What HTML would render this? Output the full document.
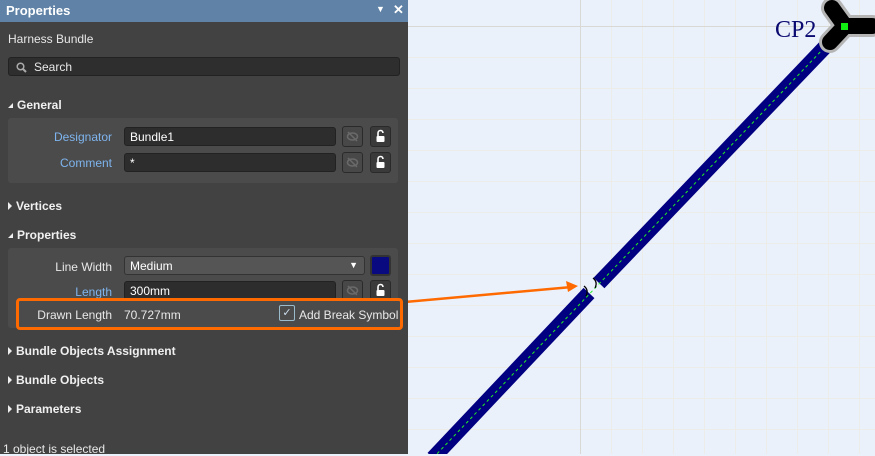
<!DOCTYPE html>
<html><head><style>
*{margin:0;padding:0;box-sizing:border-box}
body{width:875px;height:454px;overflow:hidden;background:#ebf1fb;font-family:"Liberation Sans",sans-serif;position:relative}
#p{position:absolute;left:0;top:0;width:408px;height:454px;background:#424242;color:#e8e8e8;font-size:12px}
.tb{height:22px;background:#5f82a6;color:#fff;font-weight:bold;font-size:13px;padding:3px 6px}
.abs{position:absolute}
.sec{position:absolute;left:8px;font-weight:bold;font-size:12px;color:#f0f0f0}
.tri{display:inline-block;width:0;height:0;border-top:4px solid transparent;border-bottom:4px solid transparent;border-left:4px solid #eee;margin-right:4px;vertical-align:0}
.trd{display:inline-block;width:0;height:0;border-left:5px solid transparent;border-bottom:5px solid #eee;margin-right:4px;vertical-align:1px}
.box{position:absolute;left:8px;width:390px;background:#4b4b4b;border-radius:3px}
.lbl{position:absolute;width:104px;text-align:right;font-size:12px}
.in{position:absolute;left:124px;width:212px;height:19px;background:#2d2d2d;border:1px solid #222;border-radius:3px;padding:2px 5px;font-size:12px;color:#fff}
.ib{position:absolute;width:21px;height:21px;border:1px solid #2a2a2a;border-radius:3px;background:#484848}
.lk{background:#3a3a3a}
</style></head><body>
<svg class="abs" style="left:0;top:0" width="875" height="454">
<g stroke="#ecece8" stroke-width="1">
<line x1="611.5" y1="0" x2="611.5" y2="454"/><line x1="642.5" y1="0" x2="642.5" y2="454"/><line x1="673.5" y1="0" x2="673.5" y2="454"/><line x1="704.5" y1="0" x2="704.5" y2="454"/><line x1="735.5" y1="0" x2="735.5" y2="454"/><line x1="766.5" y1="0" x2="766.5" y2="454"/><line x1="797.5" y1="0" x2="797.5" y2="454"/><line x1="828.5" y1="0" x2="828.5" y2="454"/><line x1="859.5" y1="0" x2="859.5" y2="454"/>
<line x1="408" y1="57.5" x2="875" y2="57.5"/><line x1="408" y1="88.5" x2="875" y2="88.5"/><line x1="408" y1="119.5" x2="875" y2="119.5"/><line x1="408" y1="150.5" x2="875" y2="150.5"/><line x1="408" y1="181.5" x2="875" y2="181.5"/><line x1="408" y1="212.5" x2="875" y2="212.5"/><line x1="408" y1="243.5" x2="875" y2="243.5"/><line x1="408" y1="274.5" x2="875" y2="274.5"/><line x1="408" y1="305.5" x2="875" y2="305.5"/><line x1="408" y1="336.5" x2="875" y2="336.5"/><line x1="408" y1="367.5" x2="875" y2="367.5"/><line x1="408" y1="398.5" x2="875" y2="398.5"/><line x1="408" y1="429.5" x2="875" y2="429.5"/>
</g>
<line x1="580.5" y1="0" x2="580.5" y2="454" stroke="#d8d8d4"/>
<line x1="408" y1="26.5" x2="875" y2="26.5" stroke="#d8d8d4"/>
<line x1="433" y1="458" x2="589" y2="293" stroke="#000080" stroke-width="15"/>
<line x1="599" y1="283" x2="826" y2="46" stroke="#000080" stroke-width="15"/>
<line x1="433" y1="458" x2="845" y2="26" stroke="#22ee22" stroke-width="1" stroke-dasharray="3 3"/>
<path d="M584 286 q5 4 2 10 M593 278 q5 4 2 10" stroke="#000" fill="none" stroke-width="1.3"/>
<path d="M845 26 L832 8 M845 26 L872 26 M845 26 L830 42" stroke="#b5b5b5" stroke-width="22" stroke-linecap="round"/>
<path d="M845 26 L832 8 M845 26 L872 26 M845 26 L830 42" stroke="#000" stroke-width="16" stroke-linecap="round"/>
<rect x="841" y="23" width="7" height="7" fill="#11ee11"/>
<text x="775" y="37" font-family="Liberation Serif" font-size="24" fill="#0a0a70">CP2</text>
<line x1="405" y1="302" x2="572" y2="287" stroke="#ff6a00" stroke-width="2.5"/>
<path d="M578 286 L566 281 L568 292 Z" fill="#ff6a00"/>
</svg>
<div id="p">
<div class="tb">Properties<span class="abs" style="left:376px;top:4px;font-size:9px">▼</span><span class="abs" style="left:393px;top:2px;font-size:13px">✕</span></div>
<div class="abs" style="left:8px;top:32px">Harness Bundle</div>
<div class="abs" style="left:8px;top:57px;width:392px;height:19px;background:#2e2e2e;border:1px solid #222;border-radius:3px;padding:2px 0 0 25px;font-size:12px">Search
<svg class="abs" style="left:7px;top:4px" width="11" height="11"><circle cx="4.5" cy="4.5" r="3.3" stroke="#aaa" stroke-width="1.5" fill="none"/><line x1="7" y1="7" x2="10" y2="10" stroke="#aaa" stroke-width="2"/></svg></div>
<div class="sec" style="top:98px"><span class="trd"></span>General</div>
<div class="box" style="top:118px;height:65px"></div>
<div class="lbl" style="left:8px;top:130px;color:#7eb4ee">Designator</div>
<div class="in" style="top:127px">Bundle1</div>
<div class="ib" style="left:342px;top:126px"><svg width="19" height="19"><ellipse cx="9.5" cy="9.5" rx="5" ry="3.5" fill="none" stroke="#6a6a6a" stroke-width="1.5"/><line x1="5" y1="5" x2="14" y2="14" stroke="#6a6a6a" stroke-width="1.5"/></svg></div>
<div class="ib lk" style="left:370px;top:126px"><svg width="19" height="19"><path d="M7 9 V6 a2.5 2.5 0 0 1 5 0" fill="none" stroke="#fff" stroke-width="1.6"/><rect x="5.5" y="9" width="8" height="6" rx="1" fill="#fff"/></svg></div>
<div class="lbl" style="left:8px;top:156px;color:#7eb4ee">Comment</div>
<div class="in" style="top:153px">*</div>
<div class="ib" style="left:342px;top:152px"><svg width="19" height="19"><ellipse cx="9.5" cy="9.5" rx="5" ry="3.5" fill="none" stroke="#6a6a6a" stroke-width="1.5"/><line x1="5" y1="5" x2="14" y2="14" stroke="#6a6a6a" stroke-width="1.5"/></svg></div>
<div class="ib lk" style="left:370px;top:152px"><svg width="19" height="19"><path d="M7 9 V6 a2.5 2.5 0 0 1 5 0" fill="none" stroke="#fff" stroke-width="1.6"/><rect x="5.5" y="9" width="8" height="6" rx="1" fill="#fff"/></svg></div>
<div class="sec" style="top:199px"><span class="tri"></span>Vertices</div>
<div class="sec" style="top:228px"><span class="trd"></span>Properties</div>
<div class="box" style="top:248px;height:80px"></div>
<div class="lbl" style="left:8px;top:260px">Line Width</div>
<div class="in" style="top:256px;width:241px;background:#555;border-color:#333">Medium<span class="abs" style="right:6px;top:3px;font-size:9px">▼</span></div>
<div class="ib" style="left:370px;top:255px;background:#0a0a80;border:2px solid #333"></div>
<div class="lbl" style="left:8px;top:285px;color:#7eb4ee">Length</div>
<div class="in" style="top:281px">300mm</div>
<div class="ib" style="left:342px;top:280px"><svg width="19" height="19"><ellipse cx="9.5" cy="9.5" rx="5" ry="3.5" fill="none" stroke="#6a6a6a" stroke-width="1.5"/><line x1="5" y1="5" x2="14" y2="14" stroke="#6a6a6a" stroke-width="1.5"/></svg></div>
<div class="ib lk" style="left:370px;top:280px"><svg width="19" height="19"><path d="M7 9 V6 a2.5 2.5 0 0 1 5 0" fill="none" stroke="#fff" stroke-width="1.6"/><rect x="5.5" y="9" width="8" height="6" rx="1" fill="#fff"/></svg></div>
<div class="abs" style="left:16px;top:298px;width:387px;height:32px;border:3px solid #ff6a00;border-radius:4px;background:#4b4b4b"></div>
<div class="lbl" style="left:8px;top:308px">Drawn Length</div>
<div class="abs" style="left:124px;top:308px">70.727mm</div>
<div class="abs" style="left:279px;top:305px;width:16px;height:16px;border:1px solid #9bc;border-radius:2px;font-size:11px;text-align:center;color:#cde">✓</div>
<div class="abs" style="left:299px;top:308px">Add Break Symbol</div>
<div class="sec" style="top:344px"><span class="tri"></span>Bundle Objects Assignment</div>
<div class="sec" style="top:373px"><span class="tri"></span>Bundle Objects</div>
<div class="sec" style="top:402px"><span class="tri"></span>Parameters</div>
<div class="abs" style="left:3px;top:442px">1 object is selected</div>
</div>
</body></html>
